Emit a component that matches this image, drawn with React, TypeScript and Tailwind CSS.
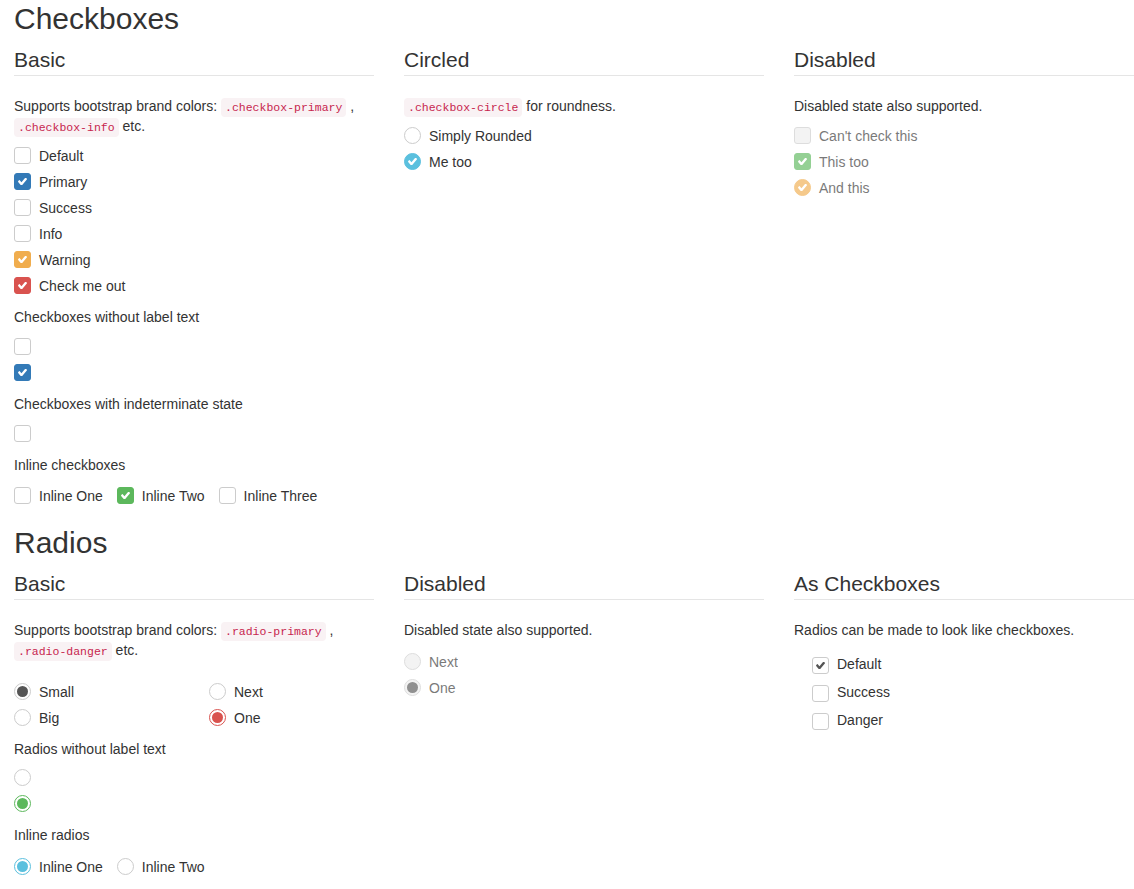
import React from 'react';

const CheckIcon = ({ className = 'text-white' }: { className?: string }) => (
  <svg viewBox="121 402 1550 1024" preserveAspectRatio="none" fill="currentColor" className={`w-[9px] h-[7px] ${className}`}>
    <path d="M1671 566q0 40-28 68l-724 724-136 136q-28 28-68 28t-68-28l-136-136-362-362q-28-28-28-68t28-68l136-136q28-28 68-28t68 28l294 295 656-657q28-28 68-28t68 28l136 136q28 28 28 68z" />
  </svg>
);

type BoxProps = { tone?: string; checked?: boolean; round?: boolean; mark?: string; top?: string };

const Box = ({ tone = 'bg-white border-[#ccc]', checked, round, mark, top = 'mt-px' }: BoxProps) => (
  <span
    className={`w-[17px] h-[17px] ${top} shrink-0 border flex items-center justify-center ${round ? 'rounded-full' : 'rounded-[3px]'} ${tone}`}
  >
    {checked && <CheckIcon className={mark ?? 'text-white'} />}
  </span>
);

const Radio = ({ ring = 'border-[#ccc] bg-white', dot }: { ring?: string; dot?: string }) => (
  <span className={`w-[17px] h-[17px] mt-px shrink-0 rounded-full border flex items-center justify-center ${ring}`}>
    {dot && <span className={`w-[11px] h-[11px] rounded-full ${dot}`} />}
  </span>
);

const Row = ({ children, label, dim, h = 'h-[21px]' }: { children: React.ReactNode; label?: string; dim?: boolean; h?: string }) => (
  <div className={`flex items-start ${h} ${dim ? 'opacity-[0.65]' : ''}`}>
    {children}
    {label && <span className="ml-2">{label}</span>}
  </div>
);

const Legend = ({ children }: { children: React.ReactNode }) => (
  <div className="text-[21px] leading-[30px] border-b border-[#e5e5e5] mb-5">{children}</div>
);

// inline code chip, kept at leading-none so it doesn't stretch the line box
const Code = ({ children }: { children: React.ReactNode }) => (
  <code className="font-['Liberation_Mono',monospace] text-[11.5px] leading-none text-[#c7254e] bg-[#f9f2f4] rounded px-1 py-[3px]">
    {children}
  </code>
);

const App = () => {
  return (
    <div className="w-[1134px] h-[889px] overflow-hidden bg-white text-[#333] text-[14px] leading-[20px] font-['Liberation_Sans',Arial,sans-serif]">
      <div className="w-[1170px] pl-[14px] pt-[2px]">
        <h2 className="text-[30px] leading-[33px] font-normal mb-[10px]">Checkboxes</h2>

        <div className="grid grid-cols-[360px_360px_360px] gap-x-[30px] items-start">
          {/* Basic */}
          <div>
            <Legend>Basic</Legend>
            <p className="mb-[10px]">
              Supports bootstrap brand colors: <Code>.checkbox-primary</Code> ,
              <br />
              <Code>.checkbox-info</Code> etc.
            </p>
            <div className="flex flex-col gap-[5px] mb-[10px]">
              <Row label="Default"><Box /></Row>
              <Row label="Primary"><Box checked tone="bg-[#337ab7] border-[#337ab7]" /></Row>
              <Row label="Success"><Box /></Row>
              <Row label="Info"><Box /></Row>
              <Row label="Warning"><Box checked tone="bg-[#f0ad4e] border-[#f0ad4e]" /></Row>
              <Row label="Check me out"><Box checked tone="bg-[#d9534f] border-[#d9534f]" /></Row>
            </div>
            <p className="mb-[10px]">Checkboxes without label text</p>
            <div className="flex flex-col gap-[5px] mb-[10px]">
              <Row><Box /></Row>
              <Row><Box checked tone="bg-[#337ab7] border-[#337ab7]" /></Row>
            </div>
            <p className="mb-[10px]">Checkboxes with indeterminate state</p>
            <div className="mb-[10px]">
              <Row><Box /></Row>
            </div>
            <p className="mb-[11px]">Inline checkboxes</p>
            <div className="flex gap-[14px]">
              <Row h="h-5" label="Inline One"><Box /></Row>
              <Row h="h-5" label="Inline Two"><Box checked tone="bg-[#5cb85c] border-[#5cb85c]" /></Row>
              <Row h="h-5" label="Inline Three"><Box /></Row>
            </div>
          </div>

          {/* Circled */}
          <div>
            <Legend>Circled</Legend>
            <p className="mb-[10px]">
              <Code>.checkbox-circle</Code> for roundness.
            </p>
            <div className="flex flex-col gap-[5px]">
              <Row label="Simply Rounded"><Box round /></Row>
              <Row label="Me too"><Box round checked tone="bg-[#5bc0de] border-[#5bc0de]" /></Row>
            </div>
          </div>

          {/* Disabled */}
          <div>
            <Legend>Disabled</Legend>
            <p className="mb-[10px]">Disabled state also supported.</p>
            <div className="flex flex-col gap-[5px]">
              <Row dim label="Can't check this"><Box tone="bg-[#eee] border-[#ccc]" /></Row>
              <Row dim label="This too"><Box checked tone="bg-[#5cb85c] border-[#5cb85c]" /></Row>
              <Row dim label="And this"><Box round checked tone="bg-[#f0ad4e] border-[#f0ad4e]" /></Row>
            </div>
          </div>
        </div>

        <h2 className="text-[30px] leading-[33px] font-normal mt-5 mb-[10px]">Radios</h2>

        <div className="grid grid-cols-[360px_360px_360px] gap-x-[30px] items-start">
          {/* Basic */}
          <div>
            <Legend>Basic</Legend>
            <p className="mb-[22px]">
              Supports bootstrap brand colors: <Code>.radio-primary</Code> ,
              <br />
              <Code>.radio-danger</Code> etc.
            </p>
            <div className="grid grid-cols-[195px_1fr] mb-[10px]">
              <div className="flex flex-col gap-[5px]">
                <Row label="Small"><Radio dot="bg-[#555]" /></Row>
                <Row label="Big"><Radio /></Row>
              </div>
              <div className="flex flex-col gap-[5px]">
                <Row label="Next"><Radio /></Row>
                <Row label="One"><Radio ring="border-[#d9534f] bg-white" dot="bg-[#d9534f]" /></Row>
              </div>
            </div>
            <p className="mb-[9px]">Radios without label text</p>
            <div className="flex flex-col gap-[5px] mb-[10px]">
              <Row><Radio /></Row>
              <Row><Radio ring="border-[#5cb85c] bg-white" dot="bg-[#5cb85c]" /></Row>
            </div>
            <p className="mb-[12px]">Inline radios</p>
            <div className="flex gap-[14px]">
              <Row h="h-5" label="Inline One"><Radio ring="border-[#5bc0de] bg-white" dot="bg-[#5bc0de]" /></Row>
              <Row h="h-5" label="Inline Two"><Radio /></Row>
            </div>
          </div>

          {/* Disabled */}
          <div>
            <Legend>Disabled</Legend>
            <p className="mb-[12px]">Disabled state also supported.</p>
            <div className="flex flex-col gap-[5px]">
              <Row dim label="Next"><Radio ring="border-[#ccc] bg-[#eee]" /></Row>
              <Row dim label="One"><Radio ring="border-[#ccc] bg-[#eee]" dot="bg-[#555]" /></Row>
            </div>
          </div>

          {/* As Checkboxes */}
          <div>
            <Legend>As Checkboxes</Legend>
            <p className="mb-[14px]">Radios can be made to look like checkboxes.</p>
            <div className="flex flex-col gap-2 pl-[18px]">
              <Row h="h-5" label="Default"><Box top="mt-[3px]" checked mark="text-[#555]" /></Row>
              <Row h="h-5" label="Success"><Box top="mt-[3px]" /></Row>
              <Row h="h-5" label="Danger"><Box top="mt-[3px]" /></Row>
            </div>
          </div>
        </div>
      </div>
    </div>
  );
};

export default App;
